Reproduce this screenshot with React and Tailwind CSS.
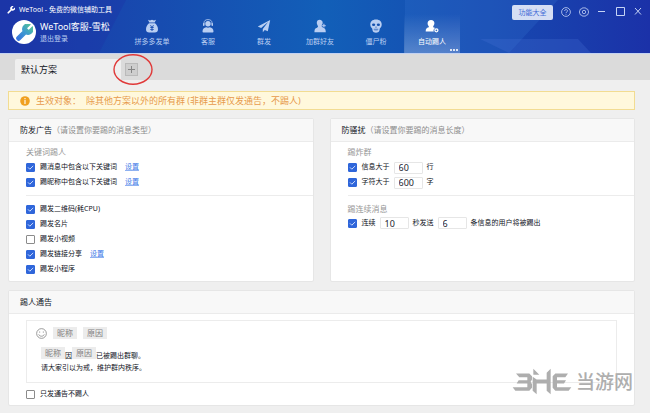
import React, { useState } from 'react';

const WRENCH =
  'M14.7 6.3a1 1 0 0 0 0 1.4l1.6 1.6a1 1 0 0 0 1.4 0l3.77-3.77a6 6 0 0 1-7.94 7.94l-6.91 6.91a2.12 2.12 0 0 1-3-3l6.91-6.91a6 6 0 0 1 7.94-7.94l-3.76 3.76z';

function MoneyBag() {
  return (
    <svg viewBox="0 0 14 14" className="size-[14px]" fill="currentColor" aria-hidden="true">
      <path d="M3 .8 5 1.500 7 .7l2 .8 2-.7-1.300 2.800H4.300L3 .8Z" />
      <path fillRule="evenodd" d="M4 4.300h6c1.800 1.500 3 3.800 3 6 0 2.200-1.200 3.200-3.200 3.200H4.200C2.200 13.500 1 12.500 1 10.300c0-2.200 1.200-4.500 3-6Zm1 2 1.300 2H5.200v.8h1.300v.8H5.200v.8h1.300V12h1v-1.300h1.300v-.8H7.500v-.8h1.300v-.8H7.700l1.300-2h-1L7 7.900l-1-1.600H5Z" />
    </svg>
  );
}

function Agent() {
  return (
    <svg viewBox="0 0 14 14" className="size-[14px]" fill="currentColor" aria-hidden="true">
      <circle cx="7" cy="4.700" r="2.700" />
      <path d="M2.900 5.500V4.400a4.100 3.800 0 0 1 8.200 0v1.100" fill="none" stroke="currentColor" strokeWidth=".8" />
      <rect x="2" y="3.900" width="1.500" height="3" rx=".7" />
      <rect x="10.500" y="3.900" width="1.500" height="3" rx=".7" />
      <path d="M1.500 12.600c0-2.600 1.600-3.900 3.700-4.300 1.200.6 2.400.6 3.600 0 2.100.4 3.700 1.700 3.700 4.300 0 .5-.3.900-.9.900H2.400c-.6 0-.9-.4-.9-.9Z" />
    </svg>
  );
}

function Plane() {
  return (
    <svg viewBox="0 0 14 14" className="size-[14px]" fill="currentColor" aria-hidden="true">
      <path d="M13.200.9.800 7.600l3.300 1.500 7-6-5.300 6.800v3.300l2-2.300 3 1.400L13.200.9Z" />
    </svg>
  );
}

function Friend() {
  return (
    <svg viewBox="0 0 14 14" className="size-[14px]" fill="currentColor" aria-hidden="true">
      <path d="M6.500.8c2 0 3.200 1.300 3.200 3.100 0 .8-.3 1.600-.7 2.200v1.500l1.200 1.100c1.800.5 2.600 1.500 2.600 4.600H1.400c0-3.100.7-4.100 2.700-4.600l1-1.100-.7-1.700C3.200 3.900 3.900.8 6.500.8Z" />
      <path d="M10.900 4.600v4.200M8.800 6.700H13" stroke="#1358b6" strokeWidth="2" />
      <path d="M10.900 4.800v3.800M9 6.700h3.800" stroke="currentColor" strokeWidth="1.100" />
    </svg>
  );
}

function Skull() {
  return (
    <svg viewBox="0 0 14 14" className="size-[14px]" aria-hidden="true">
      <path fill="currentColor" d="M7 .4c3.700 0 5.900 2.200 5.700 5.300-.1 2-.9 2.900-1.900 3.700l-.5 2.700c-.5 1-1.700 1.600-3.300 1.600s-2.800-.6-3.300-1.600l-.5-2.700C2.200 8.600 1.400 7.700 1.300 5.700 1.100 2.600 3.300.4 7 .4Z" />
      <g fill="#1450ae">
        <ellipse cx="4.600" cy="5.700" rx="1.600" ry="1.200" />
        <ellipse cx="9.400" cy="5.700" rx="1.600" ry="1.200" />
        <path d="m7 7.200.8 1.400H6.200L7 7.200Z" />
      </g>
      <path d="M4.600 10.300h4.800M5.800 9.700v2M7 9.700v2.300M8.200 9.700v2" stroke="#1450ae" strokeWidth=".4" fill="none" />
    </svg>
  );
}

function KickUser() {
  return (
    <svg viewBox="0 0 14 14" className="size-[14px]" fill="currentColor" aria-hidden="true">
      <path d="M6 .9c2.200 0 3.500 1.400 3.400 3.400 0 1.100-.5 2.200-1.200 2.900v1.100l2 .7c-1.700.8-2 2.400-1.400 3.600H.7c0-2.600.6-3.700 3.100-4.300V7.200C2.900 6.500 2.600 5.400 2.600 4.300 2.600 2.300 3.800.9 6 .9Z" />
      <circle cx="11.400" cy="11.300" r="1.500" fill="none" stroke="currentColor" strokeWidth="1.300" />
    </svg>
  );
}

const NAV = [
  { label: '拼多多发单', Icon: MoneyBag },
  { label: '客服', Icon: Agent },
  { label: '群发', Icon: Plane },
  { label: '加群好友', Icon: Friend },
  { label: '僵尸粉', Icon: Skull },
  { label: '自动踢人', Icon: KickUser, active: true },
];

function Header() {
  return (
    <header className="relative flex h-[54px] justify-between overflow-hidden border-b border-[#c3d2f2] bg-linear-to-r from-[#1b38a8] via-[#125fb8] to-[#1b31a8] text-white">
      <svg viewBox="0 0 650 53" preserveAspectRatio="none" className="absolute inset-0 size-full" aria-hidden="true">
        <path d="M0 0h126L99 53H0Z" fill="#1f2fa5" opacity=".3" />
        <path d="M405 0h153l-49 53H405Z" fill="#3b79d4" opacity=".22" />
        <path d="M480 39h98l13 14h-82Z" fill="#4a74d8" opacity=".25" />
      </svg>
      <div className="relative flex min-w-0">
        <div className="flex w-[124px] shrink-0 flex-col pt-1 pl-[7px] whitespace-nowrap">
          <div className="flex h-3 items-center gap-1 text-[7px]">
            <svg viewBox="2 2 20 20" className="size-2 shrink-0" fill="white" aria-hidden="true">
              <path d={WRENCH} />
            </svg>
            <span>WeTool - 免费的微信辅助工具</span>
          </div>
          <div className="flex items-center gap-1 pt-1 pl-[5px]">
            <span className="flex size-6 shrink-0 items-center justify-center rounded-full bg-white">
              <svg viewBox="2 2 20 20" className="size-[17px]" aria-hidden="true">
                <defs>
                  <linearGradient id="tool" x1="0" y1="1" x2="1" y2="0">
                    <stop offset="0" stopColor="#356fe0" />
                    <stop offset=".5" stopColor="#3d9bd0" />
                    <stop offset="1" stopColor="#55c98a" />
                  </linearGradient>
                </defs>
                <path fill="url(#tool)" stroke="url(#tool)" strokeWidth="1.500" strokeLinejoin="round" d={WRENCH} />
              </svg>
            </span>
            <div className="flex flex-col items-start gap-[2px]">
              <span className="text-[9px] leading-[11px]">WeTool客服-雪松</span>
              <button className="text-[7px] leading-[10px] text-[#b9cbf0]">退出登录</button>
            </div>
          </div>
        </div>
        <nav className="flex items-end">
          {NAV.map(({ label, Icon, active }) => (
            <button
              key={label}
              className={
                active
                  ? 'relative flex h-[39px] w-14 flex-col items-center gap-1 bg-linear-to-b from-white/0 to-white/25 pt-[5px] text-white'
                  : 'flex h-[39px] w-14 flex-col items-center gap-1 pt-[5px] text-[#b9cef2]'
              }
            >
              <Icon />
              <span className="text-[7px] leading-[10px]">{label}</span>
              {active && (
                <span className="absolute right-[2px] bottom-[2px] flex gap-px">
                  <i className="size-[2px] bg-white/80" />
                  <i className="size-[2px] bg-white/80" />
                  <i className="size-[2px] bg-white/80" />
                </span>
              )}
            </button>
          ))}
        </nav>
      </div>
      <div className="relative flex items-start gap-2 pt-[5px] pr-[7px] text-[#c6d4f5]">
        <button className="h-[15px] w-[41px] rounded-[2px] bg-[#d5def4] text-[7px] leading-[15px] text-[#3f6bd6]">功能大全</button>
        <div className="flex items-center gap-2 pt-[2px]">
          <button aria-label="帮助">
            <svg viewBox="0 0 10 10" className="size-[10px]" fill="none" stroke="currentColor" strokeWidth=".8">
              <circle cx="5" cy="5" r="4.400" />
              <path d="M3.600 4c0-1.900 2.900-1.800 2.900-.1C6.500 5 5 4.900 5 6.100M5 6.900v.8" />
            </svg>
          </button>
          <button aria-label="设置">
            <svg viewBox="0 0 10 10" className="size-[10px]" fill="none" stroke="currentColor" strokeWidth=".8">
              <path d="M3.300.9h3.400L7.400 2l1.300.2L9.600 5l-.9 2.800-1.300.2-.7 1.100H3.300L2.600 8l-1.300-.2L.4 5l.9-2.800L2.600 2 3.300.9Z" />
              <circle cx="5" cy="5" r="1.700" />
            </svg>
          </button>
          <button aria-label="最小化">
            <svg viewBox="0 0 10 10" className="size-[10px]" fill="none" stroke="currentColor">
              <path d="M1 4.500h7" />
            </svg>
          </button>
          <button aria-label="最大化">
            <svg viewBox="0 0 10 10" className="size-[10px]" fill="none" stroke="currentColor">
              <path d="M1.500.5h8v8h-8Z" />
            </svg>
          </button>
          <button aria-label="关闭">
            <svg viewBox="0 0 10 10" className="size-[10px]" fill="none" stroke="currentColor">
              <path d="m2 1 6 6.500M8 1 2 7.500" />
            </svg>
          </button>
        </div>
      </div>
    </header>
  );
}

function Check({ label, defaultChecked = true }) {
  return (
    <label className="flex items-center gap-[5px] whitespace-nowrap">
      <span className="relative flex size-[9px] shrink-0">
        <input
          type="checkbox"
          defaultChecked={defaultChecked}
          className="peer size-[9px] appearance-none rounded-[1px] border border-[#8b8b8b] bg-white checked:border-[#2f66da] checked:bg-[#2f66da]"
        />
        <svg viewBox="0 0 9 9" className="pointer-events-none absolute inset-0 hidden size-[9px] peer-checked:block" aria-hidden="true">
          <path d="m2 4.400 1.800 1.800L7.200 2.900" fill="none" stroke="#dce7ff" strokeWidth=".9" />
        </svg>
      </span>
      {label}
    </label>
  );
}

function NumberBox({ value, label }) {
  const [text, setText] = useState(value);
  return (
    <input
      type="text"
      aria-label={label}
      value={text}
      onChange={(e) => setText(e.target.value)}
      className="mx-1 h-3 w-[29px] rounded-[1px] border border-[#e6e6e6] bg-white px-1 text-[9px] leading-[10px] text-[#20242e]"
    />
  );
}

function SetLink() {
  return <a href="#settings" className="ml-2 text-[#3b78e7] underline decoration-[#8fb2f1] underline-offset-1">设置</a>;
}

function Card({ title, hint, children }) {
  return (
    <section className="rounded-[2px] border border-[#e6e6e6] bg-white">
      <h2 className="flex h-[23px] items-center border-b border-[#ebebeb] bg-[#f8f8f8] pl-[11px] text-[8px] font-normal text-[#10131c]">
        {title}
        {hint && <span className="text-[#8d8d8d]">{hint}</span>}
      </h2>
      {children}
    </section>
  );
}

const GROUP = 'text-[8px] leading-3 text-[#969696]';
const ROW = 'flex h-[15px] items-center';

function Tag({ children }) {
  return <button className="h-3 w-6 bg-[#ececec] text-[8px] leading-3 text-[#808080]">{children}</button>;
}

function Watermark() {
  return (
    <div className="pointer-events-none absolute right-[17px] bottom-[18px] flex items-center gap-1 text-[#aeaeae]">
      <svg viewBox="60 84 180 80" className="h-[27px] w-[60px]" fill="currentColor" aria-hidden="true">
        <path d="M72 100h40l8 8v10l-4 7 4 7v11l-8 9H70l-8-11h44v-11H74l6-10h26v-9H82Z" />
        <path d="m124 86 18 18h-18Zm-2 24 12 8h30V98l12-12v76l-12-10v-22h-30v32l-12-10Z" />
        <path d="m182 108 8-8h38l-8 11h-25v9h27l-6 10h-21v11h43l-8 11h-40l-8-9Z" />
      </svg>
      <span className="text-[19px] leading-7 font-medium">当游网</span>
    </div>
  );
}

export default function App() {
  return (
    <div
      lang="zh-CN"
      className="relative min-h-screen bg-[#efefef] font-['Noto_Sans','Noto_Sans_CJK_SC',sans-serif] text-[7px] text-[#10131c]"
    >
      <Header />
      <div className="flex h-[26px] items-end bg-[#dbdbdb] pl-[15px]">
        <button className="h-[21px] w-[106px] rounded-t-[2px] bg-[#efefef] pl-[6px] text-left text-[9px] leading-[21px]">默认方案</button>
        <div className="relative ml-1 flex h-[21px] items-center">
          <button aria-label="添加方案" className="flex size-[13px] items-center justify-center border border-[#bababa] bg-[#cecece]">
            <svg viewBox="0 0 7 7" className="size-[7px]" stroke="#858585" aria-hidden="true">
              <path d="M3.500 0v7M0 3.500h7" />
            </svg>
          </button>
          <svg viewBox="0 0 40 31" className="pointer-events-none absolute -top-[5px] -left-3 h-[31px] w-10" aria-hidden="true">
            <ellipse cx="20" cy="15.500" rx="19" ry="14.700" fill="none" stroke="#e03a3a" strokeWidth="1.400" />
          </svg>
        </div>
      </div>
      <main className="flex flex-col gap-2 pt-[11px] pr-[15px] pb-2 pl-2">
        <div className="flex h-[19px] items-center border border-[#f2dc92] bg-[#fff8dc] pl-[11px] text-[9px] text-[#e79a4c]">
          <svg viewBox="0 0 10 10" className="mr-[6px] size-[10px]" aria-hidden="true">
            <circle cx="5" cy="5" r="4.800" fill="#f0a020" />
            <path d="M5 2v1.200M5 4v4" stroke="white" strokeWidth="1.100" />
          </svg>
          <span className="w-[50px]">生效对象：</span>
          <span>除其他方案以外的所有群 (非群主群仅发通告，不踢人)</span>
        </div>
        <div className="grid grid-cols-2 gap-4">
          <Card title="防发广告" hint="（请设置你要踢的消息类型）">
            <div className="pt-1 pb-1 pl-[17px]">
              <p className={GROUP}>关键词踢人</p>
              <div className="pt-[2px] pb-[5px]">
                <div className={ROW}><Check label="踢消息中包含以下关键词" /><SetLink /></div>
                <div className={ROW}><Check label="踢昵称中包含以下关键词" /><SetLink /></div>
              </div>
              <div className="border-t border-[#ececec] pt-[6px]">
                <div className={ROW}><Check label="踢发二维码(耗CPU)" /></div>
                <div className={ROW}><Check label="踢发名片" /></div>
                <div className={ROW}><Check label="踢发小视频" defaultChecked={false} /></div>
                <div className={ROW}><Check label="踢发链接分享" /><SetLink /></div>
                <div className={ROW}><Check label="踢发小程序" /></div>
              </div>
            </div>
          </Card>
          <Card title="防骚扰" hint="（请设置你要踢的消息长度）">
            <div className="pt-1 pl-[17px]">
              <p className={GROUP}>踢炸群</p>
              <div className="pt-[2px] pb-[5px]">
                <div className={ROW}><Check label="信息大于" /><NumberBox value="60" label="行数" />行</div>
                <div className={ROW}><Check label="字符大于" /><NumberBox value="600" label="字数" />字</div>
              </div>
              <div className="border-t border-[#ececec] pt-[7px]">
                <p className={GROUP}>踢连续消息</p>
                <div className="flex items-center pt-[2px]">
                  <Check label="连续" /><NumberBox value="10" label="秒数" />秒发送<NumberBox value="6" label="条数" />条信息的用户将被踢出
                </div>
              </div>
            </div>
          </Card>
        </div>
        <Card title="踢人通告">
          <div className="pt-[6px] pr-[17px] pb-[5px] pl-[17px]">
            <div className="border border-[#ececec] px-[9px] pt-[6px] pb-2">
              <div className="flex items-center gap-[6px]">
                <button aria-label="表情">
                  <svg viewBox="0 0 12 12" className="size-[11px]" fill="none" stroke="#777" strokeWidth=".8">
                    <circle cx="6" cy="6" r="5.300" />
                    <path d="M3 7c.8 2.600 5.200 2.600 6 0M4 3.800v1.300M8 3.800v1.300" />
                  </svg>
                </button>
                <Tag>昵称</Tag>
                <Tag>原因</Tag>
              </div>
              <div className="pt-2 pl-[5px]">
                <p className="flex h-[15px] items-start">
                  <Tag>昵称</Tag>
                  <span className="self-end leading-3">因</span>
                  <Tag>原因</Tag>
                  <span className="self-end leading-3">已被踢出群聊。</span>
                </p>
                <p className="leading-3">请大家引以为戒，维护群内秩序。</p>
              </div>
            </div>
            <div className="flex items-center pt-[6px]"><Check label="只发通告不踢人" defaultChecked={false} /></div>
          </div>
        </Card>
      </main>
      <Watermark />
    </div>
  );
}
